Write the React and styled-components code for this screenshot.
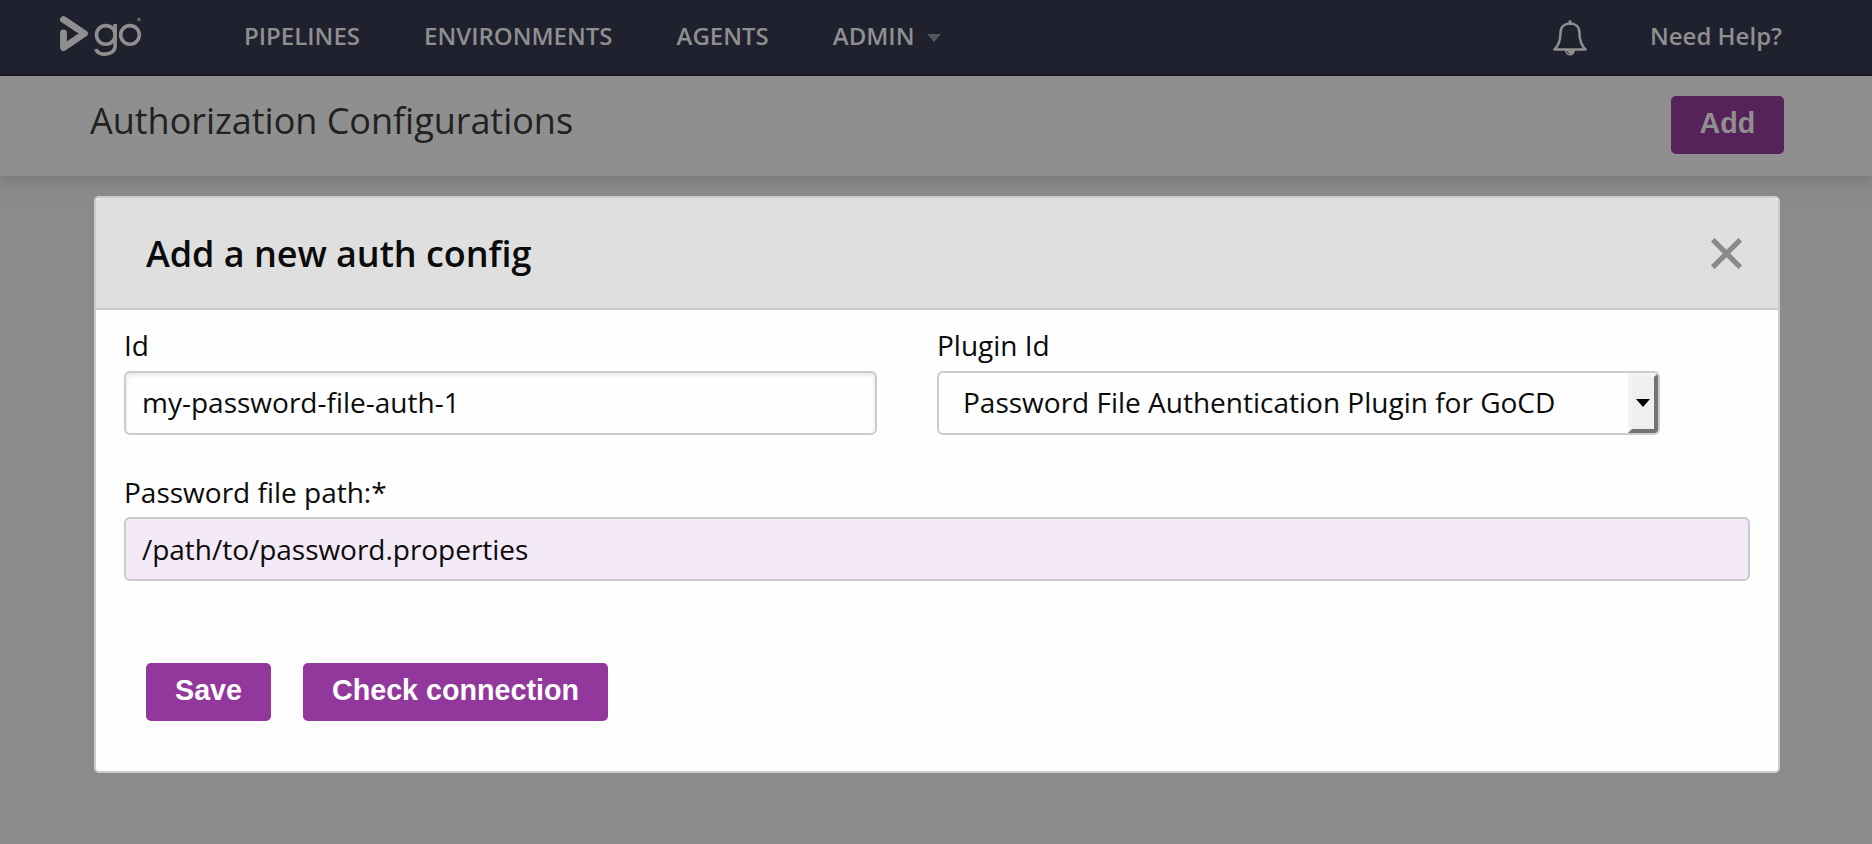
import React from "react";
import styled, { createGlobalStyle } from "styled-components";

const GlobalStyle = createGlobalStyle`
  *, *::before, *::after { box-sizing: border-box; }
  html, body { margin: 0; height: 100%; }
  body {
    overflow: hidden;
    background: #8a8b8d;
    font-family: "Open Sans", "Noto Sans", sans-serif;
    color: #0b0b0b;
  }
`;

const Page = styled.div`
  display: flex;
  flex-direction: column;
  width: 100%;
  height: 844px;
`;

const TopBar = styled.header`
  position: relative;
  z-index: 1;
  display: flex;
  align-items: flex-start;
  flex: none;
  height: 76px;
  padding: 0 90px 0 60px;
  background: #20212f;
  border-bottom: 2px solid #1b1719;
`;

const Logo = styled.svg`
  display: block;
  flex: none;
  width: 82px;
  height: 42px;
  margin: 15px 0 0 -1px;
`;

const Nav = styled.nav`
  display: flex;
  flex: 1;
  gap: 64px;
  margin-left: 103px;
`;

const NavLink = styled.a`
  display: flex;
  align-items: center;
  height: 71px;
  color: #8f8f8f;
  font-size: 24px;
  font-weight: 600;
  white-space: nowrap;
`;

const Caret = styled.span`
  margin: 5px 0 0 13px;
  border: 7px solid transparent;
  border-top: 8px solid #56565f;
  border-bottom: 0;
`;

const Tools = styled.div`
  display: flex;
  gap: 63px;
`;

const Bell = styled.svg`
  display: block;
  width: 34px;
  height: 36px;
  margin-top: 20px;
`;

const PageHeader = styled.section`
  display: flex;
  flex: none;
  justify-content: space-between;
  align-items: flex-start;
  height: 100px;
  padding: 20px 88px 0 90px;
  background: #8f8f8f;
  box-shadow: 0 4px 18px #747874;
`;

const PageTitle = styled.h1`
  margin: 0;
  color: #212121;
  font-size: 36px;
  font-weight: 400;
  letter-spacing: -0.03px;
  line-height: 50px;
`;

const Button = styled.button`
  width: ${(p) => p.$width}px;
  height: 58px;
  padding: 0 0 3px;
  border: 0;
  border-radius: 5px;
  background: ${(p) => (p.$dimmed ? "#552259" : "#92389c")};
  color: ${(p) => (p.$dimmed ? "#8f8f8f" : "#fff")};
  font: bold 28.7px "Liberation Sans", Arial, sans-serif;
  white-space: nowrap;
`;

const Modal = styled.section`
  position: relative;
  display: flex;
  flex-direction: column;
  width: 1686px;
  height: 577px;
  margin: 20px 0 0 94px;
  border: 2px solid #cbcbcb;
  border-radius: 5px;
  background: #fefefe;
`;

const ModalHeader = styled.div`
  display: flex;
  justify-content: space-between;
  align-items: center;
  flex: none;
  height: 112px;
  padding: 0 36px 0 50px;
  border-bottom: 2px solid #cbcbcb;
  border-radius: 5px 5px 0 0;
  background: #dfdfdf;
`;

const ModalTitle = styled.h2`
  margin: 0;
  padding-top: 2px;
  font-size: 36px;
  font-weight: 600;
  letter-spacing: -0.05px;
  line-height: 50px;
`;

const CloseIcon = styled.svg`
  display: block;
  width: 31px;
  height: 31px;
`;

const Form = styled.div`
  display: flex;
  flex-direction: column;
  gap: 40px;
  padding: 18px 28px 0;
`;

const FieldRow = styled.div`
  display: flex;
  gap: 60px;
`;

const Field = styled.label`
  display: flex;
  flex-direction: column;
  gap: ${(p) => p.$gap || 9}px;
  width: ${(p) => p.$width}px;
  font-size: 28px;
  line-height: 34px;
`;

const TextInput = styled.input`
  height: 64px;
  padding: ${(p) => (p.$highlighted ? "0 16px" : "0 16px 2px")};
  border: 2px solid #cbcbcb;
  border-radius: 6px;
  background: ${(p) => (p.$highlighted ? "#f4e9f6" : "#fefefe")};
  box-shadow: ${(p) => (p.$highlighted ? "none" : "inset 0 2px 4px rgba(0,0,0,0.1)")};
  color: #0b0b0b;
  font: 400 28px "Open Sans", "Noto Sans", sans-serif;
  letter-spacing: ${(p) => (p.$highlighted ? "-0.03px" : "normal")};
  outline: 0;
`;

const SelectBox = styled.div`
  display: flex;
  justify-content: space-between;
  height: 64px;
  padding-left: 24px;
  border: 2px solid #cbcbcb;
  border-radius: 6px;
  background: #fefefe;
  line-height: 58px;
  white-space: nowrap;
  overflow: hidden;
`;

const SelectArrow = styled.span`
  display: flex;
  align-items: center;
  justify-content: center;
  width: 30px;
  border: 4px solid;
  border-color: #f3f3f3 #747474 #747474 #f3f3f3;
  border-radius: 0 4px 4px 0;
  background: #efefef;

  &::after {
    content: "";
    border: 7px solid transparent;
    border-top: 8px solid #000;
    border-bottom: 0;
  }
`;

const Actions = styled.div`
  display: flex;
  gap: 32px;
  padding: 82px 50px 0;
`;

export default function App() {
  return (
    <>
      <GlobalStyle />
      <Page>
        <TopBar>
          <Logo viewBox="0 0 82 42" fill="none" stroke="#8f8f8f" aria-label="go">
            <path d="M4.5 4.5 25.5 18.5 4.5 32.7V18" strokeWidth="6.8" strokeLinecap="round" strokeLinejoin="round" />
            <circle cx="46.8" cy="19.9" r="9.3" strokeWidth="3.6" />
            <path d="M56.1 9v22c0 10-18 10.500-19 3" strokeWidth="3.6" />
            <circle cx="71" cy="19.9" r="9.3" strokeWidth="3.6" />
            <circle cx="80" cy="4.5" r="1.2" strokeWidth="1" />
          </Logo>
          <Nav>
            <NavLink>PIPELINES</NavLink>
            <NavLink>ENVIRONMENTS</NavLink>
            <NavLink>AGENTS</NavLink>
            <NavLink>
              ADMIN
              <Caret />
            </NavLink>
          </Nav>
          <Tools>
            <Bell viewBox="0 0 34 36" fill="none" stroke="#8f8f8f">
              <path
                d="M1.5 29.500C6 25 7.500 21 7.500 13 7.500 6.500 11.500 3.500 17 3.500s9.500 3 9.500 9.500c0 8 1.500 12 6 16.500Z"
                strokeWidth="2.5"
                strokeLinejoin="round"
              />
              <path d="M17 3.5V1.500" strokeWidth="3" strokeLinecap="round" />
              <path d="M12 30a5 5.500 0 0 0 10 0Z" fill="#8f8f8f" stroke="none" />
              <path d="M14 31q.5 2.500 2.500 3" stroke="#20212f" strokeWidth=".8" />
            </Bell>
            <NavLink>Need Help?</NavLink>
          </Tools>
        </TopBar>
        <PageHeader>
          <PageTitle>Authorization Configurations</PageTitle>
          <Button $width={113} $dimmed>Add</Button>
        </PageHeader>
        <Modal role="dialog">
          <ModalHeader>
            <ModalTitle>Add a new auth config</ModalTitle>
            <CloseIcon viewBox="0 0 31 31">
              <path d="M1.7 1.7 29.3 29.3M29.3 1.7 1.7 29.3" stroke="#8a8a8a" strokeWidth="5.2" />
            </CloseIcon>
          </ModalHeader>
          <Form>
            <FieldRow>
              <Field $width={753}>
                Id
                <TextInput defaultValue="my-password-file-auth-1" />
              </Field>
              <Field $width={723}>
                Plugin Id
                <SelectBox>
                  Password File Authentication Plugin for GoCD
                  <SelectArrow />
                </SelectBox>
              </Field>
            </FieldRow>
            <Field $width={1626} $gap={8}>
              Password file path:*
              <TextInput $highlighted defaultValue="/path/to/password.properties" />
            </Field>
          </Form>
          <Actions>
            <Button $width={125}>Save</Button>
            <Button $width={305}>Check connection</Button>
          </Actions>
        </Modal>
      </Page>
    </>
  );
}
